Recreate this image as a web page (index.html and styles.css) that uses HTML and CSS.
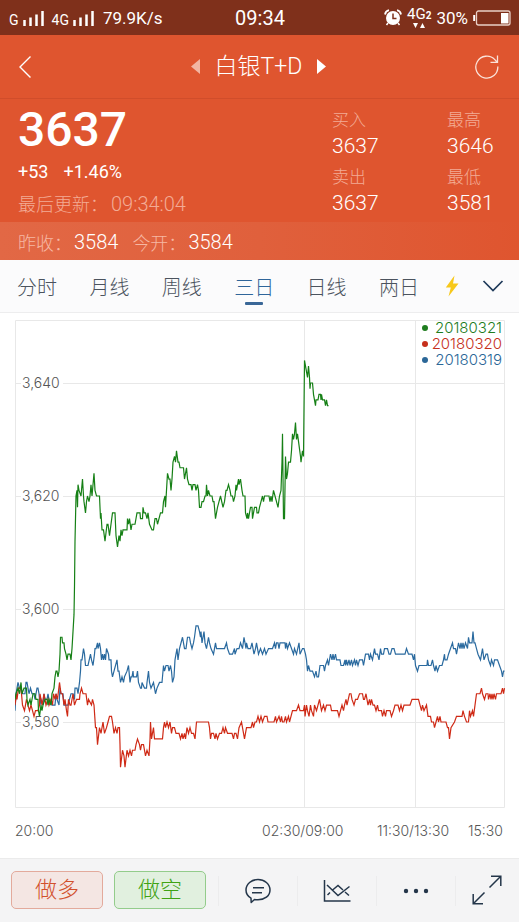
FILE: index.html
```html
<!DOCTYPE html>
<html lang="zh-CN">
<head>
<meta charset="utf-8">
<meta name="viewport" content="width=device-width, initial-scale=1">
<title>白银T+D</title>
<link rel="stylesheet" href="styles.css">
</head>
<body>
<div class="status">
  <div class="status-side">
    <span class="net">G</span>
    <svg class="signal" width="22" height="16" viewBox="0 0 22 16" aria-hidden="true"><path d="M1.500 10v6M7.500 7.500v8.500M13.500 4.500v11.500M19.500 1v15"/></svg>
    <span class="net net-4g">4G</span>
    <svg class="signal" width="22" height="16" viewBox="0 0 22 16" aria-hidden="true"><path d="M1.500 10v6M7.500 7.500v8.500M13.500 4.500v11.500M19.500 1v15"/></svg>
    <span class="speed">79.9K/s</span>
  </div>
  <time class="clock">09:34</time>
  <div class="status-side status-right">
    <svg width="18" height="17" viewBox="0 0 18 17" aria-hidden="true"><circle cx="9" cy="9" r="7" fill="#fff"/><path d="M1 5.500Q1.500 2 5 1.200M17 5.500Q16.500 2 13 1.200" fill="none" stroke="#fff" stroke-width="1.800"/><path d="M9 4.500V9.500H12.500" fill="none" stroke="#7f301b" stroke-width="1.500"/><path d="M4 14l-1.500 2M14 14l1.500 2" stroke="#fff" stroke-width="1.500"/></svg>
    <span class="mobile"><span>4G<b>2</b></span>
      <svg width="12" height="5" viewBox="0 0 12 5" aria-hidden="true"><path d="M0 0h5l-2.500 5zM7 5h5l-2.500-5z" fill="#fff"/></svg>
    </span>
    <span class="percent">30%</span>
    <svg width="38" height="16" viewBox="0 0 38 16" aria-hidden="true"><rect x="3.500" y="1" width="33.500" height="14" rx="2" fill="none" stroke="#e9cfc6" stroke-width="1.300"/><path d="M1.200 5v6" stroke="#fff" stroke-width="2"/><path d="M28 3h7.500v10.500H28z" fill="#fff"/></svg>
  </div>
</div>

<header class="header">
  <div class="titlebar">
    <button class="icon-btn back" aria-label="返回"><svg width="14" height="24" viewBox="0 0 14 24"><path d="M12.500 1.500L2 12l10.500 10.500" fill="none" stroke="#fff" stroke-width="1.400"/></svg></button>
    <div class="switcher">
      <button class="icon-btn" aria-label="上一个"><svg width="9" height="15" viewBox="0 0 9 15"><path d="M9 0v15L0 7.500z" fill="#f2b5a2"/></svg></button>
      <h1>白银T+D</h1>
      <button class="icon-btn" aria-label="下一个"><svg width="9" height="15" viewBox="0 0 9 15"><path d="M0 0v15l9-7.500z" fill="#fff"/></svg></button>
    </div>
    <button class="icon-btn" aria-label="刷新"><svg width="24" height="24" viewBox="0 0 24 24"><path d="M22.800 11.500A11 11 0 1 1 19.800 4.600L22 7M22.500 .5v6.800h-7" fill="none" stroke="#fbe3da" stroke-width="1.300"/></svg></button>
  </div>

  <section class="quote">
    <div class="quote-main">
      <strong class="price">3637</strong>
      <p class="change"><span>+53</span><span>+1.46%</span></p>
      <p class="updated">最后更新：<time>09:34:04</time></p>
    </div>
    <dl class="quote-col">
      <dt>买入</dt><dd>3637</dd>
      <dt>卖出</dt><dd>3637</dd>
    </dl>
    <dl class="quote-col">
      <dt>最高</dt><dd>3646</dd>
      <dt>最低</dt><dd>3581</dd>
    </dl>
  </section>

  <dl class="strip">
    <div><dt>昨收：</dt><dd>3584</dd></div>
    <div><dt>今开：</dt><dd>3584</dd></div>
  </dl>
</header>

<nav class="tabs">
  <div class="tab-list">
    <button class="tab">分时</button>
    <button class="tab">月线</button>
    <button class="tab">周线</button>
    <button class="tab active">三日</button>
    <button class="tab">日线</button>
    <button class="tab">两日</button>
  </div>
  <button class="icon-btn" aria-label="闪电"><svg width="14" height="22" viewBox="0 0 14 22"><path d="M9.500 .5L.8 12.500h5L3.500 21.500 13.500 8.500H8z" fill="#f7c81b"/></svg></button>
  <button class="icon-btn" aria-label="展开"><svg width="22" height="12" viewBox="0 0 22 12"><path d="M1.500 1L11 10.500 20.500 1" fill="none" stroke="#1f3a5a" stroke-width="1.700"/></svg></button>
</nav>

<main class="chart">
  <div class="plot">
    <svg class="plot-svg" viewBox="0 0 490 488" preserveAspectRatio="none" role="img" aria-label="三日走势">
      <path class="grid" d="M.5 .5H489.500V487.500H.5ZM289.500 0V488M400.500 0V488M0 63.500H6M48 63.500H490M0 176.500H6M48 176.500H490M0 289.500H6M48 289.500H490M0 402.500H6M48 402.500H490"/>
      <!-- x runs from the left edge at 15, y counts points above 3580 -->
      <g transform="translate(-15 402) scale(1 -5.650)">
        <polyline class="series blue" points="15,2 16,5 18,7 19.5,6 21,6 22.5,5 25,5 26,7 27,7 28,6 29,5 30.5,6 32,5 34,5 35,4 37,6 38,6 39,5 40,3 41,4 43,3 44,5 45,4 47,4 48,5 50,3 51,4 52,3 55,3 56,5 57,4 59,3 60,6 61,5 63,5 64,3 68,3 69.5,4 71,5 73,5 74.5,4 75,6 77,6 78,5 79.5,7 80.5,9 81,11 82,11 83.5,13 84.5,12 85.5,10 88,10 90.5,12 91.5,11 93,10 94.5,12 95,13 96,13 97.5,14 98,13 99.5,14 100.5,13 101.5,11 102.5,12 103.5,11 104.5,12 105.5,11 106.5,13 108.5,12 109,11 111,11 111.5,9 112.5,8 114,9 117,11 118,9 119,9 120.5,7 122,8 123.5,7 124.5,8 127,9 128.5,10 129,9 130,7 131,8 132,8 133,9 133.5,8 136.5,8 137.5,9 138.5,7 140.5,6 141.5,6 142,7 144.5,6 146.5,6 147,7 148.5,9 149.5,7 151,6 153.5,7 154.5,6 155.5,5 157,6 159.5,7 162,7 163.5,10 164.5,9 166,10 168,10 169,9 170.5,10 171.5,9 172.5,7 174,8 175,11 176,12 177,13 178,11 179.5,13 182.5,15 183.5,14 184.5,13 186,13 187.5,15 189.5,15 190.5,14 192,13 193.5,14 194.5,15 196,17 198,17 199.5,16 200.5,15 201,16 202,14 204,16 205,14 206.5,13 208.5,15 209.5,14 211,13 213.5,12 215.5,14 216.5,13 224.5,13 226.5,14 227.5,13 229.5,12 232.5,12 234.5,13 235,12 237,13 239,13 240.5,14 242.5,13 244,15 246,13 246.5,14 248,13 250.5,13 252,14 253,13 254,12 255.5,13 256.5,14 258.5,12 260.5,13 262.5,12 264.5,13 266,12 268.5,13 272.5,13 274.5,14 275.5,13 276.5,14 278,14 279,13 280,14 285,14 285.5,13 286.5,14 287.5,13 289.5,14 291.5,13 293.5,12 294.5,13 296.5,12 299,14 300,12 302.5,13 304,13 305.5,12 306.5,11 307.5,9 308.5,10 310,9 312.5,9 314.5,8 316,9 317,8 318.5,8 320,10 323.5,10 324.5,9 325.5,10 327.5,11 328.5,10 330.5,12 332,11 333,12 334,11 335.5,12 336.5,11 340,11 341,10 343.5,10 345,11 345.5,10 346.5,11 347.5,10 349,11 350,10 351.5,11 352.5,10 354.5,11 355.5,10 356.5,11 358,10 359.5,11 362.5,11 363.5,10 364.5,11 365.5,12 368.5,12 369.5,11 370.5,12 372.5,11 374.5,13 375.5,12 377.5,12 379,11 380.5,13 381.5,12 383.5,12 384.5,13 387.5,13 389,12 390.5,12 392,13 394,13 395.5,12 405,12 406.5,13 408.5,12 412,12 413.5,11 414.5,12 415.5,10 417.5,9 419,10 427,10 427.5,11 428.5,10 431,10 432.5,11 433.5,10 435,9 436,10 437.5,9 439.5,10 442,10 443.5,11 444.5,12 445,11 447,11 448.5,12 450.5,13 452.5,14 453.5,13 455.500,13 456.5,12 457.5,13 458.5,14 460,13 461,14 462,13 463,14 464,13 465.5,14 467.5,13 468.5,15 469.5,14 472,14 473,16 474,14 475,14 476.5,13 478,12 480.5,11 482.5,13 484,11 486,12 487.5,12 488.5,11 490.5,10 491.5,11 493.5,10 494.5,11 497.5,11 499.5,10 501.5,9 502.5,8 503.5,9 504.5,9"/>
        <polyline class="series red" points="15,3 16.5,5 17,4 18.5,6 20.5,6 21.5,5 22.5,3 24.5,2 26.5,4 28,3 29.5,2 31,3 32.5,2 34,1 35.5,2 38,2 39.5,3 40,5 42,3 44,5 46,3 48,4 49,3 51,4 52.5,3 53.5,5 55,4 56,5 57.5,4 59.5,7 61,5 62.5,5 64,3 65,4 66.5,2 67.5,1 68.5,4 70,3 71,3 73,5 74.5,3 76.5,4 79.5,4 80,5 81.5,6 83,5 86,5 87.5,3 88.5,4 91.5,3 92.5,4 94,3 95.5,-1 96.5,-1 97.5,-4 99.5,-1 101,-2 103,0 104.5,-2 106.5,-1 108,0 109.5,1 111.5,1 112.5,0 114,-2 115.5,-1 117,-2 118,-1 119.5,-1 120,-4 120.5,-8 122.5,-5 124,-6 125,-8 127,-5 128.5,-6 130,-5 131.5,-6 132.5,-5 135,-5 136,-4 137.5,-3 139.5,-4 140.5,-5 141.5,-4 143.5,-4 145.5,-6 147,-5 149,-6 150,-3 150.5,0 151.5,-3 153.5,-1 154.5,-3 162.5,-3 163.5,-1 164.5,0 165.5,-1 167,0 168.5,-1 170,0 171.5,-2 172.5,-1 174.5,-1 176,-2 179,-2 180.5,-3 182,-2 183,-3 184.5,-2 185.5,-3 187,-1 188.5,-2 190,-1 191.5,-2 193.5,-2 195,-3 196.5,0 208.5,0 209.5,-1 210.5,-3 211.5,-2 213.5,-2 215,-3 216,-2 217.5,-3 219.5,-2 221.5,-2 223,-1 224.5,-2 225.5,-1 227.5,-2 232,-2 233.5,-3 234.5,-2 236,-2 237.5,-3 239,-1 241.5,0 244.5,-3 246.5,-1 251,-1 252.5,0 253.5,-1 255,0 256.500,0 258,1 259.5,0 261,1 262.5,0 264.5,1 267,1 268,0 274,0 275.5,1 276.5,0 279,1 280.5,0 281.5,1 282.5,0 284,0 285.5,1 286.5,0 288.5,1 289.5,0 291,1 292.5,2 296.5,2 298.5,3 300,2 303.5,2 304.5,3 305,1 306.5,3 307.5,2 309,1 310.5,3 311.5,2 313.5,1 314.5,3 316.5,2 318,3 319.5,4 320.5,3 321.5,2 323.5,3 325,2 326.5,3 330.5,3 331.5,2 337.5,2 339,1 340.5,2 342,3 343.5,2 344.5,3 346,4 347,3 349.5,5 351,5 352,4 354,3 355.5,4 357.5,4 359.5,5 362.5,5 363.5,4 364.5,4 366,5 368,3 369.5,4 370.5,3 371.5,4 373,3 374.5,3 376,2 377.5,3 378.5,2 381.5,2 382.5,1 384,2 385.5,1 386.5,2 390,2 391.5,1 393.5,2 395,3 398,3 399.5,2 401,3 402.5,2 404,3 410,3 412,4 418.5,4 420,3 421.5,2 422.5,3 424,2 426.5,3 428,1 430.5,1 431.5,0 433.5,0 434.5,-1 436,0 437.5,1 438.5,0 440,1 441,0 446,0 447.5,-1 448.5,-1 449.5,-3 451,-1 454.5,0 456.5,1 462,1 463,2 464.5,1 466.5,0 468.5,0 469.5,2 470.5,1 472.5,2 473.5,1 475,3 476.5,5 480,5 481.5,6 482.5,5 484.5,4 486,5 488,5 488.5,4 490,5 491,4 492,5 493,4 494,5 495.5,4 496.5,5 501,5 502.5,6 503.5,5 504.5,6"/>
        <polyline class="series green" points="15,4 16,5 18,6 19.5,5 21,7 22,5 24,6 26.5,6 27,4 28,3 30,4 31,3 33,5 35,5 36,4 38,4 38.5,2 39.5,1 41,3 42,2 43,3 45,4 47,4 48,3 49,4 51,3 52,5 54,6 55,8 56,9 57,9 58,8 59,9 60,12 60.5,15 62,15 62.5,14 64,14 64.5,13 66,12 67,11 68,12 70,12 71,11 72,13 73,16 74,19 74.5,24 75,32 76,40 77,41 77.500,38 78,42 79,41 81,40 82.5,43 83.5,40 84,39 85.5,37 86.5,39 87.5,40 89,39 90,40 91,42 92,40 93,42 94,44 95,41 96.5,40 99.5,40 100.5,36 101,37 102,34 103.5,34 105,32 107,35 108,35 109.5,33 111,35 112.5,37 115,37 116,33 117.5,31 119,33 120,32 121,34 122,33 123,34 127,34 127.5,36 128.5,35 129.5,36 131,34 132,35 135,35 137,37 140,37 140.5,36 142.5,36 143,38 144,37 145.5,37 147,36 148,37 149.5,35 152,34 153.5,34 155,36 156.5,36 157.5,35 159,36 160.5,37 162.5,37 163.5,39 165,40 165.5,38 167.5,44 169,43 170,43 171,41 172,43 173,46 174.5,47 175.5,46 176.5,48 178,46 179,46 180,45 183.5,45 184.5,43 186.5,45 187.5,43 189,42 191,42 192,41 193,42 195,42 196,41 197.5,42 198.5,41 199.500,38 201,38 202,39 203.5,39 205,40 206,40 206.5,42 207.5,40 208.5,41 210,40 212,40 213,39 214,39 215.5,36 217.5,38 219,39 220.5,40 223,38 224.5,39 226,41 227,41 228.5,42 230,41 231,40 232.5,40 233.5,39 235,40 236,42 236.5,41 238.5,43 239,42 240.5,43 242,41 243,40 245,40 245.5,37 247,36 247.5,37 248.5,36 249.5,37 250.5,38 252,38 252.5,36 254.5,38 256.5,38 257,37 258.5,37 259.5,38 261,39 262.5,40 263.5,39 264.5,40 269,40 270,39 271,40 272,39 273.5,41 275,40 276.5,39 278,38 279.5,40 281,41 282,46 282.5,51 283.5,36 284.5,36 285.5,47 286.5,43 287.5,44 288.5,46 290.5,46 291.5,48 292.5,51 293.5,50 294.5,51 295.5,53 296.5,50 297.5,51 299,49 300.5,47 301,46 302.5,48 303.5,47 304.5,64 305.5,63 306.5,62 307.5,61 308.5,63 309.5,61 310,59 310.5,60 312.5,60 313,59 313.5,58 315.5,56 316,57 318,57 319,58 320.5,58 321,57 321.5,58 322.5,57 324.5,57 325.5,56 326.5,57 327.5,56 328.5,56"/>
      </g>
    </svg>
    <ol class="y-axis">
      <li>3,640</li>
      <li>3,620</li>
      <li>3,600</li>
      <li>3,580</li>
    </ol>
    <ul class="legend">
      <li class="green">20180321</li>
      <li class="red">20180320</li>
      <li class="blue">20180319</li>
    </ul>
  </div>
  <div class="x-axis">
    <span>20:00</span>
    <span>02:30/09:00</span>
    <span>11:30/13:30</span>
    <span>15:30</span>
  </div>
</main>

<footer class="toolbar">
  <div class="trade">
    <button class="trade-btn long">做多</button>
    <button class="trade-btn short">做空</button>
  </div>
  <div class="tools">
    <button class="tool" aria-label="评论"><svg width="26" height="26" viewBox="0 0 26 26"><path d="M6 20.200C3 18.500 1 15.500 1 12 1 6 6.500 1.500 13 1.500S25 6 25 12 19.500 21.800 13 21.800c-1.500 0-2.500 0-3.500-.3L6.200 24.500zM8 9.800h11M7 14.800h10" stroke-linejoin="round"/></svg></button>
    <button class="tool" aria-label="指标"><svg width="28" height="24" viewBox="0 0 28 24"><path d="M1.500 1V22H27.500M4 6L15 16.500 26.500 7.500M4.500 16L7 13.500M9 11.500L15 6.500 20 11M22 13L26 16.500"/></svg></button>
    <button class="tool" aria-label="更多"><svg width="26" height="6" viewBox="0 0 26 6"><g fill="#24364a" stroke="none"><circle cx="3" cy="3" r="2.200"/><circle cx="13" cy="3" r="2.200"/><circle cx="23" cy="3" r="2.200"/></g></svg></button>
    <button class="tool" aria-label="全屏"><svg width="32" height="32" viewBox="0 0 32 32"><path d="M17.500 12.500L28.500 1.500M19 1.200H28.800V11M12.500 17.500L1.500 28.500M1.200 19V28.800H11"/></svg></button>
  </div>
</footer>
</body>
</html>
```
FILE: styles.css
```css
* {
  box-sizing: border-box;
  margin: 0;
  padding: 0;
}

body {
  display: flex;
  flex-direction: column;
  min-height: 100vh;
  background: #fff;
  color: #fff;
  font-family: Roboto, "Noto Sans CJK SC", sans-serif;
  font-weight: 300;
}

button {
  border: 0;
  background: none;
  color: inherit;
  font: inherit;
  cursor: pointer;
}

svg {
  display: block;
}

ol, ul {
  list-style: none;
}

/* status bar */
.status {
  display: grid;
  grid-template-columns: 1fr auto 1fr;
  align-items: center;
  height: 35px;
  padding: 0 8px 0 9px;
  background: #7f301b;
  font-size: 17px;
  font-weight: 400;
}

.status-side {
  display: flex;
  align-items: center;
  gap: 4px;
}

.status-right {
  gap: 5px;
  justify-content: flex-end;
}

.net {
  padding-top: 4px;
  font-size: 14px;
}

.net-4g {
  padding-left: 3px;
}

.speed {
  padding-left: 4px;
}

.signal path {
  stroke: #fff;
  stroke-width: 2.5px;
}

.clock {
  font-size: 20px;
}

.mobile {
  display: flex;
  flex-direction: column;
  align-items: center;
  font-size: 15px;
  line-height: 14px;
}

.mobile b {
  font-size: 10px;
}

/* header */
.header {
  background: #df552f;
}

.titlebar {
  display: flex;
  align-items: center;
  justify-content: space-between;
  height: 64px;
  padding: 0 20px 0 18px;
  border-bottom: 1px solid #d04d2b;
}

.icon-btn {
  flex: none;
}

.back {
  width: 24px;
}

.switcher {
  display: flex;
  align-items: center;
  gap: 15px;
}

.switcher h1 {
  font-size: 23px;
  font-weight: 300;
  line-height: 32px;
}

.quote {
  display: grid;
  grid-template-columns: 1fr 115px 54px;
  padding: 9px 18px 5px;
}

.quote-main {
  display: flex;
  flex-direction: column;
  gap: 8px;
}

.price {
  font-size: 48px;
  font-weight: 500;
  line-height: 44px;
}

.change {
  display: flex;
  gap: 15px;
  font-size: 18px;
  font-weight: 400;
  line-height: 24px;
}

.updated {
  color: #f3ab95;
  font-size: 18px;
  line-height: 24px;
}

.updated time {
  margin-left: 3px;
  font-size: 20px;
}

.quote-col dt {
  color: #f3ab95;
  font-size: 17px;
  line-height: 24px;
}

.quote-col dd {
  margin-bottom: 5px;
  font-size: 21px;
  line-height: 28px;
}

.quote-col dd:last-child {
  margin-bottom: 0;
}

.strip {
  display: flex;
  align-items: center;
  gap: 14px;
  height: 38px;
  padding: 2px 18px 0;
  background: linear-gradient(90deg, #e26845, #e0603c 50%, #df552f);
}

.strip div {
  display: flex;
  align-items: center;
}

.strip dt {
  margin-right: 2px;
  color: #f6b7a3;
  font-size: 18px;
}

.strip dd {
  font-size: 20px;
}

/* period tabs */
.tabs {
  display: flex;
  align-items: center;
  height: 53px;
  padding: 0 15px 0 17px;
  border-bottom: 1px solid #ededee;
  background: #fbfbfc;
}

.tab-list {
  display: flex;
  flex: 1;
  justify-content: space-between;
  margin-right: 26px;
}

.tabs .icon-btn + .icon-btn {
  margin-left: 23px;
}

.tab {
  position: relative;
  height: 52px;
  color: #4b535e;
  font-size: 20px;
}

.tab.active {
  color: #2f659a;
}

.tab.active::after {
  position: absolute;
  bottom: 7px;
  left: 50%;
  width: 18px;
  height: 3px;
  margin-left: -9px;
  border-radius: 1px;
  background: #3a6797;
  content: "";
}

/* chart */
.chart {
  flex: 1;
  padding: 7px 14px 0 15px;
  color: #555;
  font-family: Inter, sans-serif;
  font-size: 14px;
}

.plot {
  position: relative;
}

.plot-svg {
  width: 100%;
  height: 488px;
}

.grid {
  fill: none;
  stroke: #e8e8e8;
  vector-effect: non-scaling-stroke;
}

.series {
  fill: none;
  stroke-width: 1.2px;
  vector-effect: non-scaling-stroke;
}

.series.green { stroke: #168016; }
.series.red { stroke: #cf2a16; }
.series.blue { stroke: #2a6a9f; }

/* labels sit on the grid lines, which are 113px apart from 63px down */
.y-axis {
  position: absolute;
  top: 53px;
  left: 7px;
  display: grid;
  grid-auto-rows: 113px;
  line-height: 20px;
}

.legend {
  position: absolute;
  top: 0;
  right: 3px;
  font-size: 15px;
  line-height: 16px;
}

.legend li {
  display: flex;
  align-items: center;
  justify-content: space-between;
  gap: 4px;
}

.legend li::before {
  width: 6px;
  height: 6px;
  border-radius: 50%;
  background: currentColor;
  content: "";
}

.legend .green { color: #1f7d1f; }
.legend .red { color: #c62f1b; }
.legend .blue { color: #2b6797; }

.x-axis {
  display: grid;
  grid-template-columns: 247fr 115fr 91fr 37fr;
  margin-top: 13px;
  line-height: 20px;
  white-space: nowrap;
}

/* bottom bar */
.toolbar {
  display: flex;
  align-items: flex-start;
  height: 64px;
  padding-left: 11px;
  border-top: 1px solid #ebebeb;
  background: #f4f4f5;
}

.trade {
  display: flex;
  gap: 11px;
  padding: 12px 12px 0 0;
}

.trade-btn {
  width: 92px;
  height: 38px;
  border: 1px solid;
  border-radius: 5px;
  font-size: 22px;
  line-height: 34px;
}

.long {
  border-color: #e3aa9c;
  background: #f4e6e3;
  color: #d2502c;
}

.short {
  border-color: #93cc8b;
  background: #e1f0df;
  color: #3fa314;
}

.tools {
  display: grid;
  flex: 1;
  grid-template-columns: 1fr 1fr 1fr 64px;
  padding-top: 17px;
}

.tool {
  display: flex;
  align-items: center;
  justify-content: center;
  height: 30px;
  border-left: 1px solid #ececed;
}

.tool path {
  fill: none;
  stroke: #24364a;
  stroke-width: 1.5px;
}
```
